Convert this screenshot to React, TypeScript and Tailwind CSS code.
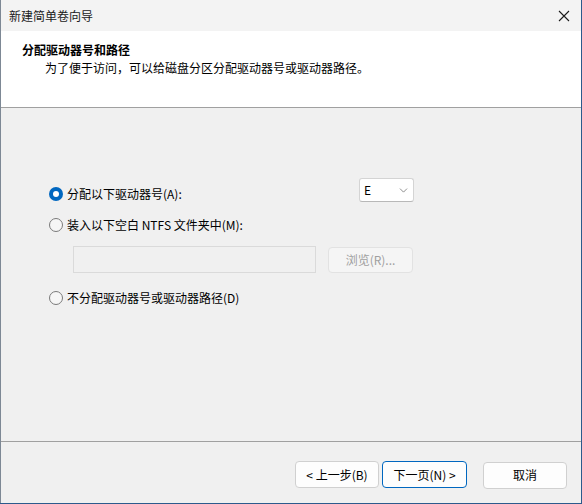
import { ChevronDown } from "lucide-react";

const font = { fontFamily: '"Noto Sans CJK SC", "Noto Sans", sans-serif' };

function Radio({ checked, label }: { checked?: boolean; label: string }) {
  return (
    <div className="flex items-center h-[16px]">
      {checked ? (
        <span className="w-[14px] h-[14px] rounded-full bg-[#0067c0] flex items-center justify-center">
          <span className="w-[6px] h-[6px] rounded-full bg-white" />
        </span>
      ) : (
        <span className="w-[14px] h-[14px] rounded-full border border-[#7a7a7a] bg-[#f6f6f6]" />
      )}
      <span className="ml-[4px] text-[12px] leading-[16px] text-black">{label}</span>
    </div>
  );
}

function Btn({ children, primary }: { children: React.ReactNode; primary?: boolean }) {
  return (
    <button
      className={
        primary
          ? "w-[85px] h-[27px] rounded-[4px] bg-[#fdfdfd] border border-[#0067c0] text-[12px] leading-[16px] text-black"
          : "w-[84px] h-[27px] rounded-[4px] bg-[#fdfdfd] border border-[#d0d0d0] text-[12px] leading-[16px] text-black"
      }
    >
      {children}
    </button>
  );
}

export default function App() {
  return (
    <div className="w-[582px] h-[504px] bg-[#2c5a8c]" style={font}>
      <div className="w-[581px] h-[503px] flex flex-col bg-[#f0f0f0] border-l border-[#7d8895]">
        {/* title bar */}
        <div className="h-[31px] bg-[#f3f3f3] flex items-center justify-between pl-[8px] pr-[9px]">
          <span className="text-[12px] leading-[16px] text-[#1a1a1a]">新建简单卷向导</span>
          <svg width="12" height="12" viewBox="0 0 12 12" className="mr-[2px]">
            <path d="M1 1 L11 11 M11 1 L1 11" stroke="#1a1a1a" strokeWidth="1.1" />
          </svg>
        </div>

        {/* header */}
        <div className="h-[76px] bg-white pl-[21px] pt-[11px]">
          <div className="text-[12px] leading-[16px] font-bold text-black">分配驱动器号和路径</div>
          <div className="text-[12px] leading-[16px] text-black mt-[2px] pl-[23px]">
            为了便于访问，可以给磁盘分区分配驱动器号或驱动器路径。
          </div>
        </div>
        <div className="h-px bg-[#a0a0a0]" />

        {/* body */}
        <div className="h-[333px] pt-[70px] pl-[48px]">
          <div className="w-[365px] flex justify-between items-start">
            <div className="mt-[8px]">
              <Radio checked label="分配以下驱动器号(A):" />
            </div>
            <div className="w-[55px] h-[24px] bg-white border border-[#d4d4d4] border-b-[#b8b8b8] rounded-[3px] flex items-center justify-between pl-[4px] pr-[3px]">
              <span className="text-[12px] leading-[16px] text-black">E</span>
              <ChevronDown size={13} strokeWidth={1.3} color="#5f5f5f" />
            </div>
          </div>
          <div className="mt-[15px]">
            <Radio label="装入以下空白 NTFS 文件夹中(M):" />
          </div>
          <div className="mt-[13px] ml-[24px] flex items-center gap-[12px]">
            <div className="w-[243px] h-[27px] bg-[#f0f0f0] border border-[#dadada]" />
            <div className="w-[85px] h-[26px] rounded-[4px] bg-[#f5f5f5] border border-[#e2e2e2] flex items-center justify-center text-[12px] leading-[16px] text-[#a0a0a0]">
              浏览(R)...
            </div>
          </div>
          <div className="mt-[17px]">
            <Radio label="不分配驱动器号或驱动器路径(D)" />
          </div>
        </div>
        <div className="h-px bg-[#a0a0a0]" />

        {/* footer */}
        <div className="flex-1 flex justify-end items-start pt-[19px] pr-[14px]">
          <div className="flex gap-[3px]">
            <Btn>&lt; 上一步(B)</Btn>
            <Btn primary>下一页(N) &gt;</Btn>
          </div>
          <div className="ml-[16px]">
            <Btn>取消</Btn>
          </div>
        </div>
      </div>
    </div>
  );
}
